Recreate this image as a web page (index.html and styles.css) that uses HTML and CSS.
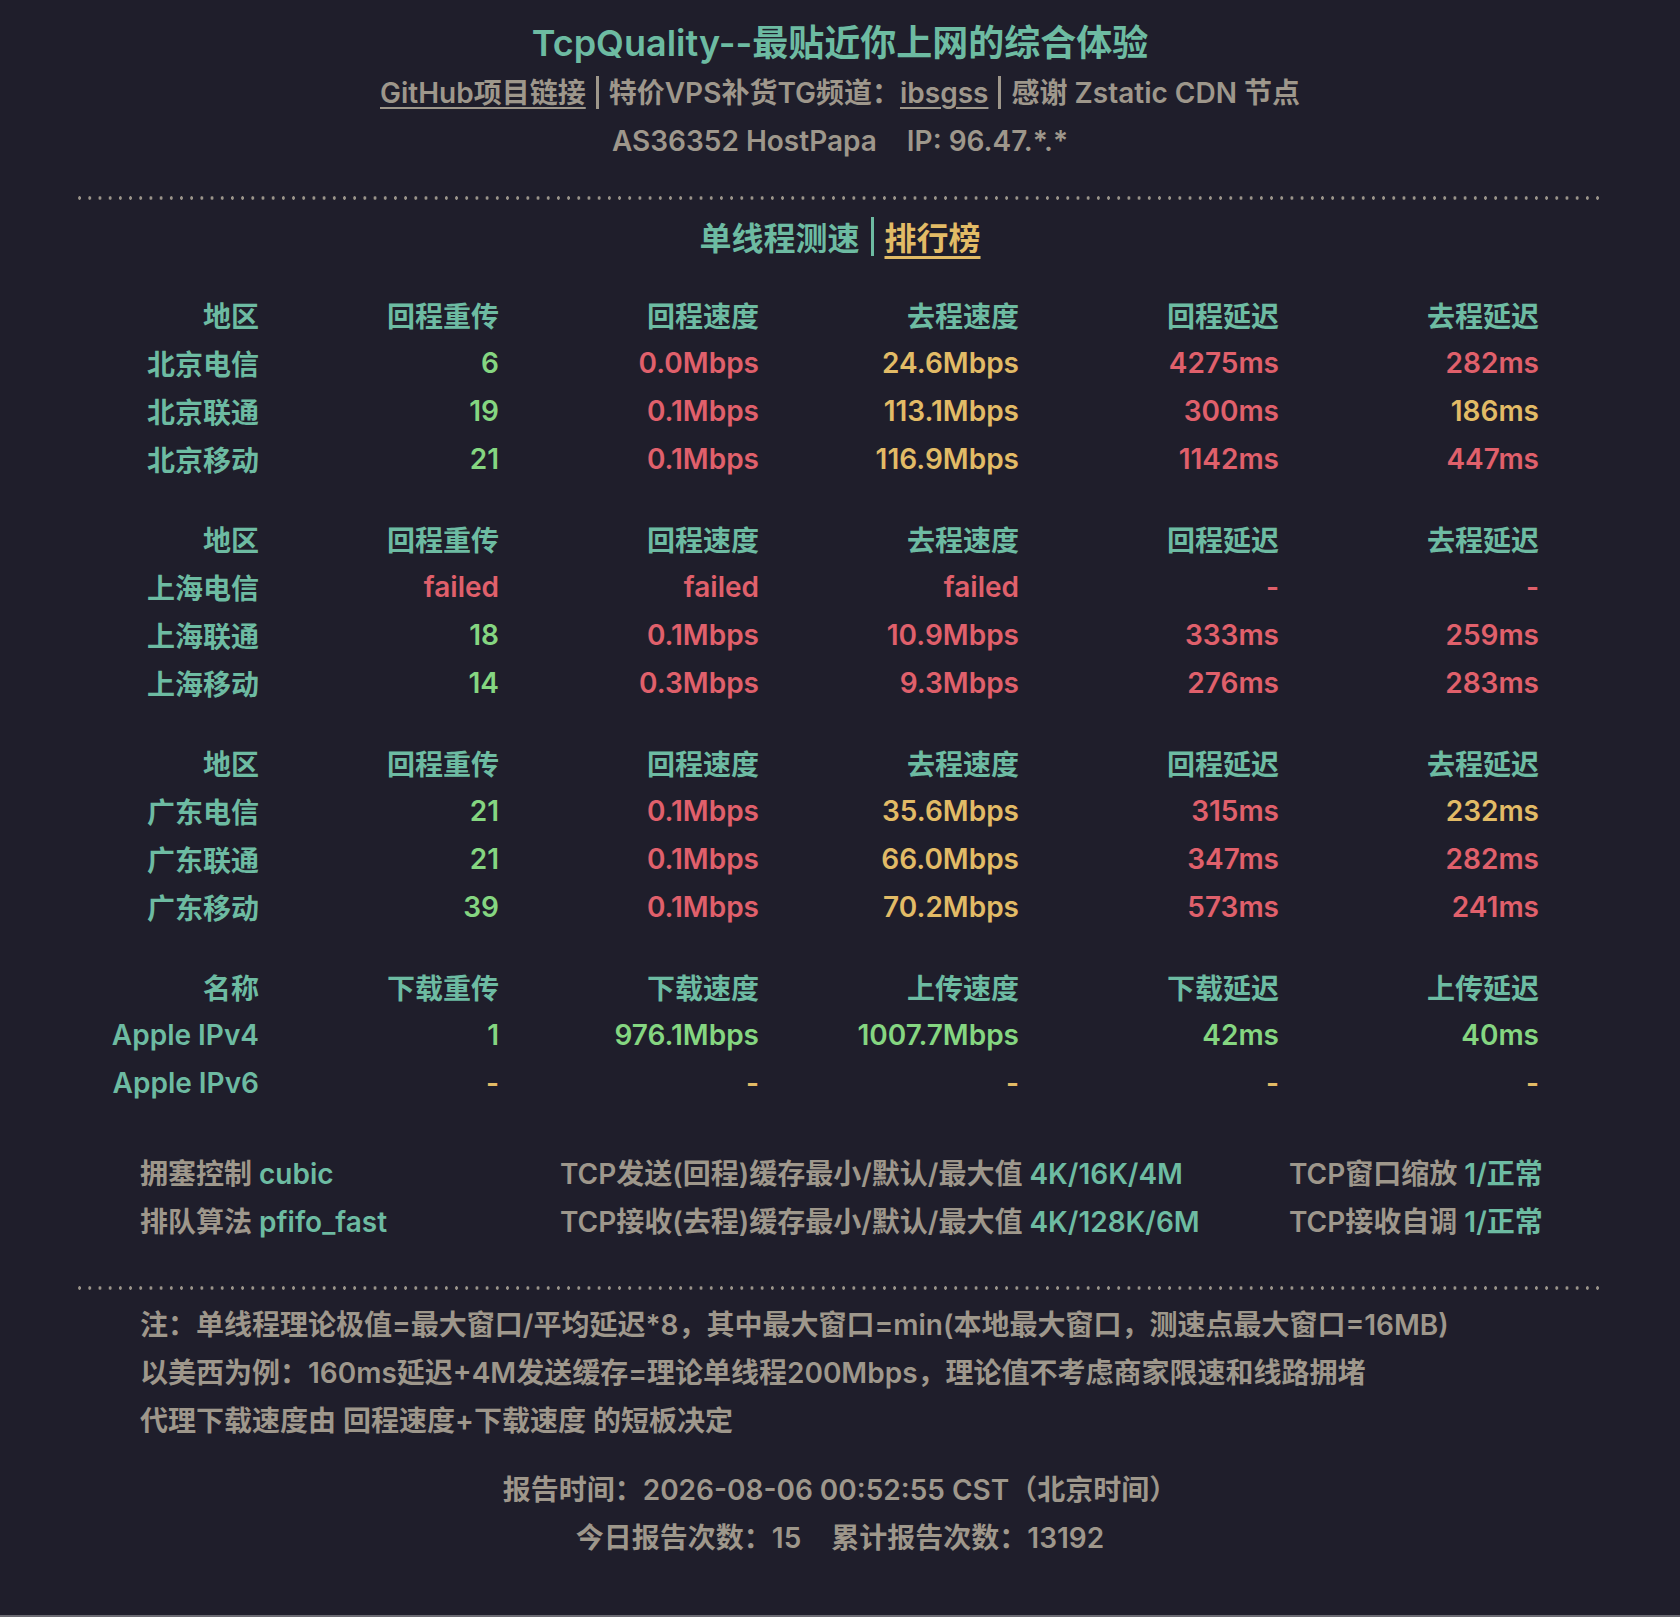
FILE: index.html
```html
<!DOCTYPE html>
<html lang="zh-CN">
<head>
<meta charset="utf-8">
<title>TcpQuality</title>
<link rel="stylesheet" href="styles.css">
</head>
<body>
<div class="page">
  <header class="head">
    <h1 class="title">TcpQuality--最贴近你上网的综合体验</h1>
    <p class="sub"><a class="link" href="#">GitHub项目链接</a><span class="bar"></span>特价VPS补货TG频道：<a class="link" href="#">ibsgss</a><span class="bar"></span>感谢 Zstatic CDN 节点</p>
    <p class="sub">AS36352 HostPapa<span class="gap"></span>IP: 96.47.*.*</p>
  </header>

  <div class="dots"></div>

  <div class="tabs"><span class="tab-on">单线程测速</span><span class="tab-bar"></span><a class="tab-link" href="#">排行榜</a></div>

  <section class="tables">
    <div class="grp">
      <span class="h">地区</span><span class="h">回程重传</span><span class="h">回程速度</span><span class="h">去程速度</span><span class="h">回程延迟</span><span class="h">去程延迟</span>
      <span class="h">北京电信</span><span class="g">6</span><span class="r">0.0Mbps</span><span class="y">24.6Mbps</span><span class="r">4275ms</span><span class="r">282ms</span>
      <span class="h">北京联通</span><span class="g">19</span><span class="r">0.1Mbps</span><span class="y">113.1Mbps</span><span class="r">300ms</span><span class="y">186ms</span>
      <span class="h">北京移动</span><span class="g">21</span><span class="r">0.1Mbps</span><span class="y">116.9Mbps</span><span class="r">1142ms</span><span class="r">447ms</span>
    </div>
    <div class="grp">
      <span class="h">地区</span><span class="h">回程重传</span><span class="h">回程速度</span><span class="h">去程速度</span><span class="h">回程延迟</span><span class="h">去程延迟</span>
      <span class="h">上海电信</span><span class="r">failed</span><span class="r">failed</span><span class="r">failed</span><span class="r">-</span><span class="r">-</span>
      <span class="h">上海联通</span><span class="g">18</span><span class="r">0.1Mbps</span><span class="r">10.9Mbps</span><span class="r">333ms</span><span class="r">259ms</span>
      <span class="h">上海移动</span><span class="g">14</span><span class="r">0.3Mbps</span><span class="r">9.3Mbps</span><span class="r">276ms</span><span class="r">283ms</span>
    </div>
    <div class="grp">
      <span class="h">地区</span><span class="h">回程重传</span><span class="h">回程速度</span><span class="h">去程速度</span><span class="h">回程延迟</span><span class="h">去程延迟</span>
      <span class="h">广东电信</span><span class="g">21</span><span class="r">0.1Mbps</span><span class="y">35.6Mbps</span><span class="r">315ms</span><span class="y">232ms</span>
      <span class="h">广东联通</span><span class="g">21</span><span class="r">0.1Mbps</span><span class="y">66.0Mbps</span><span class="r">347ms</span><span class="r">282ms</span>
      <span class="h">广东移动</span><span class="g">39</span><span class="r">0.1Mbps</span><span class="y">70.2Mbps</span><span class="r">573ms</span><span class="r">241ms</span>
    </div>
    <div class="grp">
      <span class="h">名称</span><span class="h">下载重传</span><span class="h">下载速度</span><span class="h">上传速度</span><span class="h">下载延迟</span><span class="h">上传延迟</span>
      <span class="h">Apple IPv4</span><span class="g">1</span><span class="g">976.1Mbps</span><span class="g">1007.7Mbps</span><span class="g">42ms</span><span class="g">40ms</span>
      <span class="h">Apple IPv6</span><span class="y">-</span><span class="y">-</span><span class="y">-</span><span class="y">-</span><span class="y">-</span>
    </div>
  </section>

  <section class="sys">
    <span>拥塞控制 <b>cubic</b></span>
    <span>TCP发送(回程)缓存最小/默认/最大值 <b>4K/16K/4M</b></span>
    <span>TCP窗口缩放 <b>1/正常</b></span>
    <span>排队算法 <b>pfifo_fast</b></span>
    <span>TCP接收(去程)缓存最小/默认/最大值 <b>4K/128K/6M</b></span>
    <span>TCP接收自调 <b>1/正常</b></span>
  </section>

  <div class="dots dots2"></div>

  <section class="notes">
    <p>注：单线程理论极值=最大窗口/平均延迟*8，其中最大窗口=min(本地最大窗口，测速点最大窗口=16MB)</p>
    <p>以美西为例：160ms延迟+4M发送缓存=理论单线程200Mbps，理论值不考虑商家限速和线路拥堵</p>
    <p>代理下载速度由 回程速度+下载速度 的短板决定</p>
  </section>

  <footer class="foot">
    <p>报告时间：2026-08-06 00:52:55 CST（北京时间）</p>
    <p>今日报告次数：15<span class="gap"></span>累计报告次数：13192</p>
  </footer>
</div>
</body>
</html>
```

FILE: styles.css
```css
html {
  background: #6b6a72;
}
body {
  margin: 0;
  font-family: "Inter", "Noto Sans CJK SC", sans-serif;
  font-weight: 600;
  font-size: 28px;
  color: #9e978b;
}
.page {
  background: #1f1e2b;
  height: 1615px;
  padding: 17px 78px 0;
  box-sizing: border-box;
}
p { margin: 0; }
.head { text-align: center; }
.title {
  margin: 0;
  font-size: 36px;
  line-height: 52px;
  font-weight: 600;
  color: #6dbba2;
}
.sub {
  line-height: 48px;
}
.link {
  color: #9e978b;
  text-decoration: underline;
  text-decoration-thickness: 2px;
  text-underline-offset: 4px;
}
.bar {
  display: inline-block;
  width: 3px;
  height: 33px;
  background: #9e978b;
  vertical-align: -6px;
  margin: 0 10px;
}
.gap {
  display: inline-block;
  width: 30px;
}
.dots {
  margin-top: 31px;
  height: 4px;
  background-image: radial-gradient(circle, #9a948a 1.5px, transparent 1.9px);
  background-size: 10.2px 4px;
  background-position: -3.5px 0;
  background-repeat: repeat-x;
}
.tabs {
  margin-top: 12px;
  height: 48px;
  display: flex;
  justify-content: center;
  align-items: center;
  font-size: 32px;
}
.tab-on { color: #6dbba2; }
.tab-bar {
  width: 3px;
  height: 39px;
  background: #6dbba2;
  margin: 0 11px;
}
.tab-link {
  color: #e2bb66;
  text-decoration: underline;
  text-decoration-thickness: 3px;
  text-underline-offset: 6px;
}
.tables {
  margin-top: 31px;
  padding-left: 22px;
  display: flex;
  flex-direction: column;
  gap: 32px;
}
.grp {
  display: grid;
  grid-template-columns: 159px 240px repeat(4, 260px);
  grid-auto-rows: 48px;
  align-items: center;
  text-align: right;
  white-space: nowrap;
}
.h { color: #6dbba2; }
.g { color: #85d681; }
.r { color: #e0606b; }
.y { color: #e2bb66; }
.sys {
  margin-top: 41px;
  padding-left: 62px;
  display: grid;
  grid-template-columns: 420px 729px 251px;
  grid-auto-rows: 48px;
  align-items: center;
  white-space: nowrap;
}
.sys b {
  font-weight: 600;
  color: #6dbba2;
}
.dots2 { margin-top: 42px; }
.notes {
  margin-top: 11px;
  padding-left: 62px;
  line-height: 48px;
}
.foot {
  margin-top: 21px;
  text-align: center;
  line-height: 48px;
}
```
